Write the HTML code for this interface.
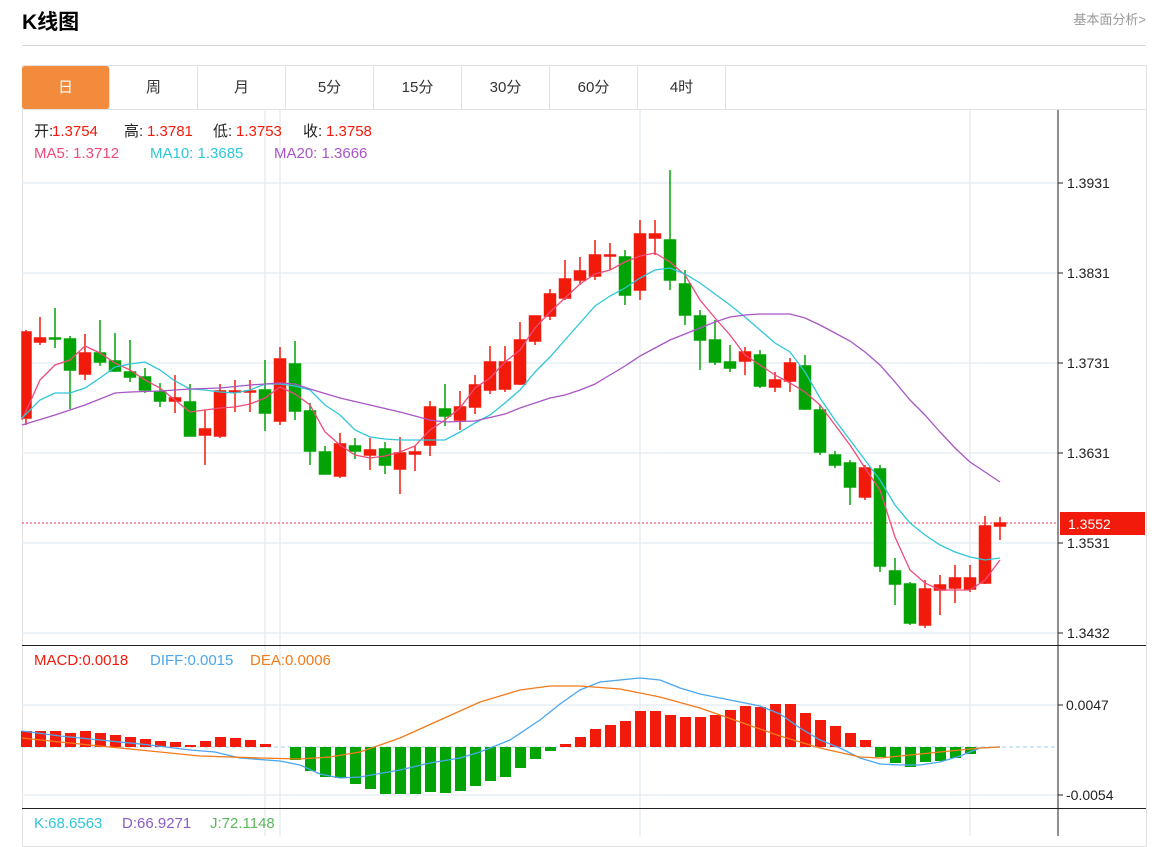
<!DOCTYPE html>
<html><head><meta charset="utf-8"><style>
body{margin:0;background:#fff;width:1167px;height:836px;overflow:hidden;font-family:"Liberation Sans","Noto Sans CJK SC",sans-serif;position:relative}
.t{position:absolute;left:22px;top:6px;font-size:21px;font-weight:bold;color:#000}
.lk{position:absolute;right:21px;top:9px;font-size:13px;color:#999}
.hr{position:absolute;left:22px;top:45px;width:1124px;height:1px;background:#d4d4d4}
.box{position:absolute;left:22px;top:65px;width:1123px;height:780px;border:1px solid #e2e2e2}
.tabs{position:absolute;left:22px;top:66px;height:43px;display:flex;border-bottom:1px solid #e2e2e2;width:1124px}
.tabs div{width:87px;border-right:1px solid #e2e2e2;text-align:center;line-height:43px;font-size:15px;color:#333}
.tabs .a{background:#f28b3c;color:#fff;border-radius:3px;width:87px}
svg{position:absolute;left:0;top:0}
</style></head><body>
<div class="t">K线图</div><div class="lk">基本面分析&gt;</div><div class="hr"></div>
<div class="box"></div>
<div class="tabs"><div class="a">日</div><div>周</div><div>月</div><div>5分</div><div>15分</div><div>30分</div><div>60分</div><div>4时</div></div>
<svg width="1167" height="836" font-family="Liberation Sans, Noto Sans CJK SC, sans-serif">
<g stroke="#e6edf2" stroke-width="1.5">
<line x1="22" y1="183" x2="1058" y2="183"/><line x1="22" y1="273" x2="1058" y2="273"/><line x1="22" y1="363" x2="1058" y2="363"/><line x1="22" y1="453" x2="1058" y2="453"/><line x1="22" y1="543" x2="1058" y2="543"/><line x1="22" y1="633" x2="1058" y2="633"/>
<line x1="22" y1="705" x2="1058" y2="705"/><line x1="22" y1="795" x2="1058" y2="795"/>
<line x1="265" y1="110" x2="265" y2="836"/><line x1="280" y1="110" x2="280" y2="836"/><line x1="640" y1="110" x2="640" y2="836"/><line x1="970" y1="110" x2="970" y2="836"/>
</g>
<line x1="1058" y1="110" x2="1058" y2="836" stroke="#222"/>
<line x1="22" y1="645.5" x2="1146" y2="645.5" stroke="#222"/>
<line x1="22" y1="808.5" x2="1146" y2="808.5" stroke="#222"/>
<g stroke="#222"><line x1="1058" y1="183" x2="1063" y2="183"/><line x1="1058" y1="273" x2="1063" y2="273"/><line x1="1058" y1="363" x2="1063" y2="363"/><line x1="1058" y1="453" x2="1063" y2="453"/><line x1="1058" y1="543" x2="1063" y2="543"/><line x1="1058" y1="633" x2="1063" y2="633"/><line x1="1058" y1="705" x2="1063" y2="705"/><line x1="1058" y1="795" x2="1063" y2="795"/></g>
<g font-size="14" fill="#222"><text x="1067" y="188">1.3931</text><text x="1067" y="278">1.3831</text><text x="1067" y="368">1.3731</text><text x="1067" y="458">1.3631</text><text x="1067" y="548">1.3531</text><text x="1067" y="638">1.3432</text><text x="1066" y="710">0.0047</text><text x="1066" y="800">-0.0054</text></g>
<line x1="22" y1="523" x2="1058" y2="523" stroke="#f03" stroke-dasharray="2,2" opacity=".8"/>
<rect x="1060" y="512" width="85" height="23" fill="#f21a0a"/><text x="1068" y="529" font-size="14" fill="#fff">1.3552</text>
<g font-size="15">
<text x="34" y="136" fill="#222">开:</text><text x="52" y="136" fill="#f21a0a">1.3754</text>
<text x="124" y="136" fill="#222">高:</text><text x="147" y="136" fill="#f21a0a">1.3781</text>
<text x="213" y="136" fill="#222">低:</text><text x="236" y="136" fill="#f21a0a">1.3753</text>
<text x="303" y="136" fill="#222">收:</text><text x="326" y="136" fill="#f21a0a">1.3758</text>
<text x="34" y="158" fill="#ee4a7a">MA5: 1.3712</text><text x="150" y="158" fill="#2ec7d9">MA10: 1.3685</text><text x="274" y="158" fill="#a855c5">MA20: 1.3666</text>
<text x="34" y="665" fill="#f21a0a">MACD:0.0018</text><text x="150" y="665" fill="#4aa6ee">DIFF:0.0015</text><text x="250" y="665" fill="#f27b1b">DEA:0.0006</text>
<text x="34" y="828" fill="#2ec7d9">K:68.6563</text><text x="122" y="828" fill="#8a5cc5">D:66.9271</text><text x="210" y="828" fill="#5cb85c">J:72.1148</text>
</g>
<g id="c" stroke-width="1.5">
<g stroke="#f21a0a" fill="#f21a0a">
<line x1="26" y1="330" x2="26" y2="425"/><rect x="22" y="332" width="9" height="86"/>
<line x1="40" y1="317" x2="40" y2="345"/><rect x="34.5" y="338" width="11" height="4"/>
<line x1="85" y1="334" x2="85" y2="380"/><rect x="79.5" y="353" width="11" height="21"/>
<line x1="175" y1="375" x2="175" y2="413"/><rect x="169.5" y="398" width="11" height="3"/>
<line x1="205" y1="410" x2="205" y2="465"/><rect x="199.5" y="429" width="11" height="6"/>
<line x1="220" y1="384" x2="220" y2="438"/><rect x="214.5" y="391" width="11" height="45"/>
<line x1="235" y1="380" x2="235" y2="412"/><rect x="229.5" y="391" width="11" height="1"/>
<line x1="250" y1="380" x2="250" y2="412"/><rect x="244.5" y="391" width="11" height="1"/>
<line x1="280" y1="347" x2="280" y2="425"/><rect x="274.5" y="359" width="11" height="62"/>
<line x1="340" y1="433" x2="340" y2="478"/><rect x="334.5" y="444" width="11" height="32"/>
<line x1="370" y1="438" x2="370" y2="470"/><rect x="364.5" y="450" width="11" height="5"/>
<line x1="400" y1="437" x2="400" y2="494"/><rect x="394.5" y="453" width="11" height="16"/>
<line x1="415" y1="446" x2="415" y2="471"/><rect x="409.5" y="452" width="11" height="2"/>
<line x1="430" y1="401" x2="430" y2="456"/><rect x="424.5" y="407" width="11" height="38"/>
<line x1="460" y1="391" x2="460" y2="430"/><rect x="454.5" y="407" width="11" height="13"/>
<line x1="475" y1="375" x2="475" y2="414"/><rect x="469.5" y="385" width="11" height="22"/>
<line x1="490" y1="346" x2="490" y2="394"/><rect x="484.5" y="362" width="11" height="28"/>
<line x1="505" y1="346" x2="505" y2="392"/><rect x="499.5" y="362" width="11" height="27"/>
<line x1="520" y1="322" x2="520" y2="385"/><rect x="514.5" y="340" width="11" height="44"/>
<line x1="535" y1="316" x2="535" y2="345"/><rect x="529.5" y="316" width="11" height="25"/>
<line x1="550" y1="289" x2="550" y2="320"/><rect x="544.5" y="294" width="11" height="22"/>
<line x1="565" y1="260" x2="565" y2="300"/><rect x="559.5" y="279" width="11" height="19"/>
<line x1="580" y1="257" x2="580" y2="285"/><rect x="574.5" y="271" width="11" height="9"/>
<line x1="595" y1="240" x2="595" y2="280"/><rect x="589.5" y="255" width="11" height="21"/>
<line x1="610" y1="243" x2="610" y2="270"/><rect x="604.5" y="255" width="11" height="1"/>
<line x1="640" y1="220" x2="640" y2="300"/><rect x="634.5" y="234" width="11" height="56"/>
<line x1="655" y1="220" x2="655" y2="255"/><rect x="649.5" y="234" width="11" height="4"/>
<line x1="745" y1="347" x2="745" y2="375"/><rect x="739.5" y="352" width="11" height="9"/>
<line x1="775" y1="372" x2="775" y2="392"/><rect x="769.5" y="380" width="11" height="7"/>
<line x1="790" y1="358" x2="790" y2="392"/><rect x="784.5" y="363" width="11" height="18"/>
<line x1="865" y1="465" x2="865" y2="500"/><rect x="859.5" y="468" width="11" height="29"/>
<line x1="925" y1="580" x2="925" y2="628"/><rect x="919.5" y="589" width="11" height="36"/>
<line x1="940" y1="575" x2="940" y2="615"/><rect x="934.5" y="585" width="11" height="5"/>
<line x1="955" y1="565" x2="955" y2="603"/><rect x="949.5" y="578" width="11" height="10"/>
<line x1="970" y1="565" x2="970" y2="592"/><rect x="964.5" y="578" width="11" height="11"/>
<line x1="985" y1="516" x2="985" y2="584"/><rect x="979.5" y="526" width="11" height="57"/>
<line x1="1000" y1="517" x2="1000" y2="540"/><rect x="994.5" y="523" width="11" height="3"/>
</g>
<g stroke="#02a305" fill="#02a305">
<line x1="55" y1="308" x2="55" y2="348"/><rect x="49.5" y="338" width="11" height="1"/>
<line x1="70" y1="336" x2="70" y2="409"/><rect x="64.5" y="339" width="11" height="31"/>
<line x1="100" y1="320" x2="100" y2="366"/><rect x="94.5" y="353" width="11" height="9"/>
<line x1="115" y1="333" x2="115" y2="372"/><rect x="109.5" y="361" width="11" height="10"/>
<line x1="130" y1="340" x2="130" y2="382"/><rect x="124.5" y="372" width="11" height="5"/>
<line x1="145" y1="368" x2="145" y2="393"/><rect x="139.5" y="377" width="11" height="13"/>
<line x1="160" y1="383" x2="160" y2="407"/><rect x="154.5" y="392" width="11" height="9"/>
<line x1="190" y1="384" x2="190" y2="436"/><rect x="184.5" y="402" width="11" height="34"/>
<line x1="265" y1="360" x2="265" y2="431"/><rect x="259.5" y="390" width="11" height="23"/>
<line x1="295" y1="341" x2="295" y2="420"/><rect x="289.5" y="364" width="11" height="47"/>
<line x1="310" y1="403" x2="310" y2="465"/><rect x="304.5" y="411" width="11" height="40"/>
<line x1="325" y1="446" x2="325" y2="474"/><rect x="319.5" y="452" width="11" height="22"/>
<line x1="355" y1="438" x2="355" y2="459"/><rect x="349.5" y="446" width="11" height="5"/>
<line x1="385" y1="442" x2="385" y2="474"/><rect x="379.5" y="449" width="11" height="16"/>
<line x1="445" y1="384" x2="445" y2="426"/><rect x="439.5" y="409" width="11" height="7"/>
<line x1="625" y1="250" x2="625" y2="305"/><rect x="619.5" y="257" width="11" height="38"/>
<line x1="670" y1="170" x2="670" y2="290"/><rect x="664.5" y="240" width="11" height="40"/>
<line x1="685" y1="270" x2="685" y2="325"/><rect x="679.5" y="284" width="11" height="31"/>
<line x1="700" y1="310" x2="700" y2="370"/><rect x="694.5" y="316" width="11" height="24"/>
<line x1="715" y1="320" x2="715" y2="365"/><rect x="709.5" y="340" width="11" height="22"/>
<line x1="730" y1="345" x2="730" y2="372"/><rect x="724.5" y="362" width="11" height="6"/>
<line x1="760" y1="350" x2="760" y2="388"/><rect x="754.5" y="355" width="11" height="31"/>
<line x1="805" y1="355" x2="805" y2="410"/><rect x="799.5" y="366" width="11" height="43"/>
<line x1="820" y1="405" x2="820" y2="455"/><rect x="814.5" y="410" width="11" height="42"/>
<line x1="835" y1="451" x2="835" y2="468"/><rect x="829.5" y="455" width="11" height="10"/>
<line x1="850" y1="460" x2="850" y2="505"/><rect x="844.5" y="463" width="11" height="24"/>
<line x1="880" y1="465" x2="880" y2="572"/><rect x="874.5" y="469" width="11" height="97"/>
<line x1="895" y1="558" x2="895" y2="605"/><rect x="889.5" y="571" width="11" height="13"/>
<line x1="910" y1="582" x2="910" y2="625"/><rect x="904.5" y="584" width="11" height="39"/>
</g></g>
<g fill="none" stroke-width="1.3">
<polyline stroke="#ee4a7a" points="22,420 40,380 55,365 70,360 85,346 100,353 115,363 130,370 145,380 160,388 175,400 190,412 205,410 220,408 235,407 250,404 265,398 280,387 295,394 310,405 325,432 340,445 355,455 370,458 385,456 400,452 415,446 430,430 445,420 460,408 475,388 490,378 505,362 520,350 535,328 550,312 565,298 580,284 595,274 610,270 625,262 640,256 655,253 670,262 685,275 700,300 715,318 730,335 745,355 760,365 775,375 790,383 805,392 820,405 835,425 850,445 865,468 880,490 895,537 910,570 925,583 940,590 955,590 970,590 985,580 1000,560"/>
<polyline stroke="#2ec7d9" points="22,418 40,400 55,393 70,393 85,388 100,378 115,367 130,364 145,362 160,370 175,381 190,389 205,390 220,392 235,393 250,390 265,384 280,384 295,386 310,390 325,405 340,415 355,430 370,437 385,439 400,440 415,440 430,440 445,440 460,432 475,423 490,415 505,403 520,390 535,372 550,357 565,340 580,323 595,306 610,296 625,288 640,278 655,270 670,268 685,274 700,283 715,294 730,305 745,317 760,330 775,343 790,352 805,372 820,398 835,420 850,440 865,460 880,480 895,505 910,523 925,535 940,545 955,552 970,557 985,560 1000,558"/>
<polyline stroke="#a855c5" points="22,425 55,415 85,405 115,393 130,392 160,391 190,389 220,388 250,385 280,383 295,384 310,389 340,398 370,405 400,412 430,420 445,422 475,421 505,414 520,408 550,398 565,395 580,390 595,384 610,375 625,366 640,356 655,348 670,340 685,334 700,328 715,322 730,317 745,315 760,314 775,314 790,314 805,318 820,325 835,333 850,341 865,352 880,365 895,382 910,400 925,415 940,432 955,448 970,462 985,472 1000,482"/>
</g>
<line x1="22" y1="747" x2="1058" y2="747" stroke="#9cd0ea" stroke-dasharray="4,3"/>
<g fill="#f21a0a">
<rect x="21" y="731" width="11" height="16"/><rect x="35" y="731" width="11" height="16"/><rect x="50" y="731" width="11" height="16"/><rect x="65" y="733" width="11" height="14"/><rect x="80" y="731" width="11" height="16"/><rect x="95" y="733" width="11" height="14"/><rect x="110" y="735" width="11" height="12"/><rect x="125" y="737" width="11" height="10"/><rect x="140" y="739" width="11" height="8"/><rect x="155" y="741" width="11" height="6"/><rect x="170" y="742" width="11" height="5"/><rect x="185" y="745" width="11" height="2"/><rect x="200" y="741" width="11" height="6"/><rect x="215" y="737" width="11" height="10"/><rect x="230" y="738" width="11" height="9"/><rect x="245" y="740" width="11" height="7"/><rect x="260" y="744" width="11" height="3"/>
<rect x="560" y="744" width="11" height="3"/><rect x="575" y="737" width="11" height="10"/><rect x="590" y="729" width="11" height="18"/><rect x="605" y="725" width="11" height="22"/><rect x="620" y="721" width="11" height="26"/><rect x="635" y="711" width="11" height="36"/><rect x="650" y="711" width="11" height="36"/><rect x="665" y="715" width="11" height="32"/><rect x="680" y="717" width="11" height="30"/><rect x="695" y="717" width="11" height="30"/><rect x="710" y="715" width="11" height="32"/><rect x="725" y="710" width="11" height="37"/><rect x="740" y="706" width="11" height="41"/><rect x="755" y="707" width="11" height="40"/><rect x="770" y="704" width="11" height="43"/><rect x="785" y="704" width="11" height="43"/><rect x="800" y="713" width="11" height="34"/><rect x="815" y="720" width="11" height="27"/><rect x="830" y="726" width="11" height="21"/><rect x="845" y="733" width="11" height="14"/><rect x="860" y="740" width="11" height="7"/>
</g>
<g fill="#02a305">
<rect x="290" y="747" width="11" height="13"/><rect x="305" y="747" width="11" height="24"/><rect x="320" y="747" width="11" height="30"/><rect x="335" y="747" width="11" height="31"/><rect x="350" y="747" width="11" height="37"/><rect x="365" y="747" width="11" height="42"/><rect x="380" y="747" width="11" height="47"/><rect x="395" y="747" width="11" height="47"/><rect x="410" y="747" width="11" height="47"/><rect x="425" y="747" width="11" height="45"/><rect x="440" y="747" width="11" height="46"/><rect x="455" y="747" width="11" height="44"/><rect x="470" y="747" width="11" height="39"/><rect x="485" y="747" width="11" height="34"/><rect x="500" y="747" width="11" height="30"/><rect x="515" y="747" width="11" height="21"/><rect x="530" y="747" width="11" height="12"/><rect x="545" y="747" width="11" height="4"/>
<rect x="875" y="747" width="11" height="10"/><rect x="890" y="747" width="11" height="16"/><rect x="905" y="747" width="11" height="20"/><rect x="920" y="747" width="11" height="15"/><rect x="935" y="747" width="11" height="14"/><rect x="950" y="747" width="11" height="11"/><rect x="965" y="747" width="11" height="7"/>
</g>
<g fill="none" stroke-width="1.3">
<polyline stroke="#4aa6ee" points="22,731 60,736 100,740 150,745 190,750 215,752 240,758 280,761 300,765 320,774 340,778 360,777 400,770 430,763 460,758 480,752 510,740 540,720 560,704 580,690 600,682 620,680 640,678 660,680 680,688 700,694 720,698 740,702 760,706 780,714 800,728 820,740 840,748 860,758 880,764 900,765 920,765 940,762 960,756 980,748 1000,747"/>
<polyline stroke="#f27b1b" points="22,738 60,742 100,746 150,751 200,756 260,758 300,759 330,757 360,752 400,738 440,720 480,702 520,690 550,686 580,686 620,689 660,697 700,708 740,722 780,736 820,748 860,757 880,758 900,756 940,752 980,748 1000,747"/>
</g>
</svg>
</body></html>
